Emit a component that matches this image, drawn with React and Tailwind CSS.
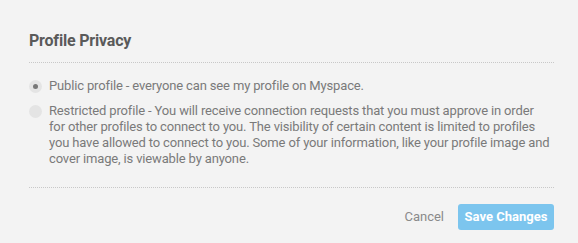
import React, { useState } from "react";

// lines are broken where the original layout breaks them
const options = [
  {
    id: "public",
    lines: ["Public profile - everyone can see my profile on Myspace."],
  },
  {
    id: "restricted",
    lines: [
      "Restricted profile - You will receive connection requests that you must approve in order",
      "for other profiles to connect to you. The visibility of certain content is limited to profiles",
      "you have allowed to connect to you. Some of your information, like your profile image and",
      "cover image, is viewable by anyone.",
    ],
  },
];

const App = () => {
  const [privacy, setPrivacy] = useState("public");

  return (
    <div className="w-[578px] h-[243px] bg-[#f3f3f3] pl-[29px] pr-[24px] pt-[31px] font-['Roboto',sans-serif]">
      <h2 className="text-[16px] leading-[20px] font-bold text-[#5a5a5a] tracking-[-0.2px]">
        Profile Privacy
      </h2>

      {/* options */}
      <div className="mt-[11px] border-t border-dotted border-[#c8c8c8] pt-[15px] pb-[20px] flex flex-col gap-[9px]">
        {options.map((opt) => (
          <label
            key={opt.id}
            onClick={() => setPrivacy(opt.id)}
            className="flex items-start gap-[7px] cursor-pointer"
          >
            <span className="mt-[2px] w-[13px] h-[13px] rounded-full bg-[#e4e4e4] flex items-center justify-center shrink-0">
              {privacy === opt.id && (
                <span className="w-[5px] h-[5px] rounded-full bg-[#777]" />
              )}
            </span>
            <span className="whitespace-nowrap text-[13px] leading-[16px] text-[#7a7a7a] tracking-[-0.15px]">
              {opt.lines.map((line, i) => (
                <React.Fragment key={i}>
                  {i > 0 && <br />}
                  {line}
                </React.Fragment>
              ))}
            </span>
          </label>
        ))}
      </div>

      <div className="border-t border-dotted border-[#c8c8c8] pt-[16px] flex justify-end items-center gap-[14px]">
        <button className="text-[13px] text-[#8a8a8a]">Cancel</button>
        <button className="w-[96px] h-[26px] rounded-[3px] bg-[#7cc5ee] text-white text-[13px] font-bold">
          Save Changes
        </button>
      </div>
    </div>
  );
};

export default App;
